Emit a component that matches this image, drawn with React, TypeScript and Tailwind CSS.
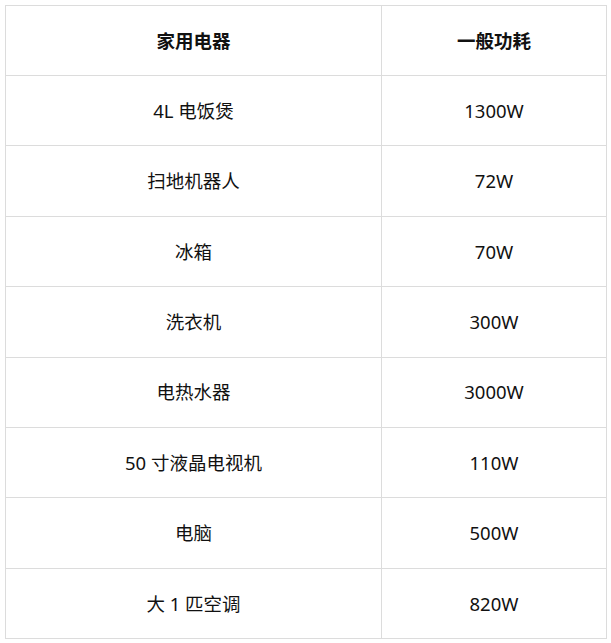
const rows: [string, string][] = [
  ["4L 电饭煲", "1300W"],
  ["扫地机器人", "72W"],
  ["冰箱", "70W"],
  ["洗衣机", "300W"],
  ["电热水器", "3000W"],
  ["50 寸液晶电视机", "110W"],
  ["电脑", "500W"],
  ["大 1 匹空调", "820W"],
];

export default function App() {
  return (
    <div className="min-h-screen bg-white pl-[5px] pt-[5px] font-['Noto_Sans','Noto_Sans_CJK_SC',sans-serif] text-[18.5px] text-[#111]">
      <table className="w-[601px] border-collapse table-fixed">
        <colgroup>
          <col className="w-[376px]" />
          <col className="w-[225px]" />
        </colgroup>
        <thead>
          <tr className="h-[70px]">
            <th className="border border-[#dcdcdc] text-center font-bold">家用电器</th>
            <th className="border border-[#dcdcdc] text-center font-bold">一般功耗</th>
          </tr>
        </thead>
        <tbody>
          {rows.map(([name, watt]) => (
            <tr key={name} className="h-[70.4px]">
              <td className="border border-[#dcdcdc] text-center">{name}</td>
              <td className="border border-[#dcdcdc] text-center">{watt}</td>
            </tr>
          ))}
        </tbody>
      </table>
    </div>
  );
}
